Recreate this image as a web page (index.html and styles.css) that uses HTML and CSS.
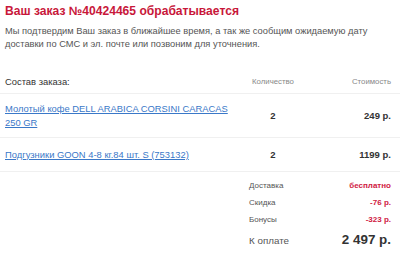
FILE: index.html
```html
<!DOCTYPE html>
<html lang="ru">
<head>
<meta charset="utf-8">
<link rel="stylesheet" href="styles.css">
</head>
<body>
<div class="page">
  <h1 class="title">Ваш заказ №40424465 обрабатывается</h1>
  <p class="intro">Мы подтвердим Ваш заказ в ближайшее время, а так же сообщим ожидаемую дату доставки по СМС и эл. почте или позвоним для уточнения.</p>

  <div class="order">
    <div class="row head">
      <div class="c-name head-title">Состав заказа:</div>
      <div class="c-qty head-col">Количество</div>
      <div class="c-price head-col">Стоимость</div>
    </div>
    <div class="row item">
      <div class="c-name"><a href="#" class="link">Молотый кофе DELL ARABICA CORSINI CARACAS 250 GR</a></div>
      <div class="c-qty qty">2</div>
      <div class="c-price price">249 р.</div>
    </div>
    <div class="row item">
      <div class="c-name"><a href="#" class="link">Подгузники GOON 4-8 кг.84 шт. S (753132)</a></div>
      <div class="c-qty qty">2</div>
      <div class="c-price price">1199 р.</div>
    </div>
    <div class="summary">
      <div class="s-row"><span class="s-label">Доставка</span><span class="s-val">бесплатно</span></div>
      <div class="s-row"><span class="s-label">Скидка</span><span class="s-val">-76 р.</span></div>
      <div class="s-row"><span class="s-label">Бонусы</span><span class="s-val">-323 р.</span></div>
      <div class="s-row total"><span class="total-label">К оплате</span><span class="total-val">2 497 р.</span></div>
    </div>
  </div>
</div>
</body>
</html>
```

FILE: styles.css
```css
* { box-sizing: border-box; }
html, body { margin: 0; padding: 0; background: #fff; }
body {
  font-family: "Liberation Sans", Arial, sans-serif;
  color: #555;
  width: 400px;
  overflow: hidden;
}
.page { padding-top: 2px; }
.title {
  margin: 0;
  padding: 0 5px;
  font-size: 12.1px;
  line-height: 18px;
  font-weight: bold;
  color: #c8173a;
}
.intro {
  margin: 5px 0 0;
  padding: 0 9px 0 5px;
  font-size: 9.3px;
  line-height: 12.5px;
  color: #555;
}
.order { margin-top: 25px; }
.row {
  display: grid;
  grid-template-columns: 230px 76px 1fr;
  align-items: center;
  padding: 0 9px 0 5px;
  border-bottom: 1px solid #f0f0f0;
  font-size: 9.4px;
  line-height: 13.5px;
}
.head { padding-bottom: 4px; line-height: 14px; }
.head-title { font-size: 9.4px; color: #333; }
.head-col { font-size: 7.8px; color: #888; }
.c-qty { text-align: center; }
.c-price { text-align: right; }
.item { min-height: 34px; padding-top: 8px; padding-bottom: 8px; }
.link {
  color: #3a78c8;
  text-decoration: underline;
}
.qty, .price { font-size: 9.5px; font-weight: bold; color: #333; }
.summary {
  margin: 0 9px 0 249px;
  padding-top: 6px;
}
.s-row {
  display: flex;
  justify-content: space-between;
  align-items: baseline;
  font-size: 8px;
  line-height: 16.8px;
}
.s-label { color: #555; }
.s-val { color: #d0203f; font-weight: bold; }
.total { line-height: 20px; margin-top: 2px; }
.total-label { font-size: 9.8px; color: #555; }
.total-val { font-size: 13.4px; color: #333; font-weight: bold; }
```
